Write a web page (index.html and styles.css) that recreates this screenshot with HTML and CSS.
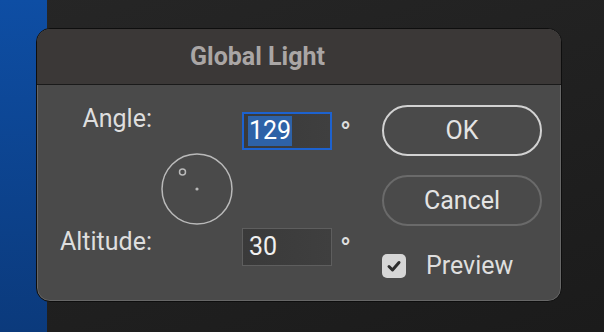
FILE: index.html
```html
<!DOCTYPE html>
<html lang="en">
<head>
  <meta charset="UTF-8">
  <title>Global Light</title>
  <link rel="stylesheet" href="styles.css">
</head>
<body>
  <div class="desktop">
    <div class="side-strip"></div>

    <div class="dialog">
      <div class="dialog-title">Global Light</div>

      <div class="dialog-body">
        <div class="fields">
          <div class="label label-angle">Angle:</div>
          <div class="field field-focus"><span class="selected">129</span></div>
          <div class="deg">°</div>

          <div class="dial">
            <svg width="72" height="72" viewBox="0 0 72 72">
              <circle cx="36" cy="36" r="35" fill="none" stroke="#b9b9b9" stroke-width="1.5"/>
              <circle cx="21.5" cy="19" r="3" fill="none" stroke="#b9b9b9" stroke-width="1.5"/>
              <circle cx="36" cy="36" r="1.6" fill="#b9b9b9"/>
            </svg>
          </div>

          <div class="label label-alt">Altitude:</div>
          <div class="field"><span>30</span></div>
          <div class="deg">°</div>
        </div>

        <div class="actions">
          <button class="btn btn-default">OK</button>
          <button class="btn">Cancel</button>
          <label class="check">
            <span class="box">
              <svg width="16" height="16" viewBox="0 0 16 16">
                <path d="M3 8.5 L6.5 12 L13 4.5" fill="none" stroke="#2e2e2e" stroke-width="3" stroke-linecap="round" stroke-linejoin="round"/>
              </svg>
            </span>
            Preview
          </label>
        </div>
      </div>
    </div>
  </div>
</body>
</html>
```

FILE: styles.css
```css
body {
  margin: 0;
  font-family: Roboto, "Liberation Sans", sans-serif;
  background-color: #202020;
}

.desktop {
  position: relative;
  width: 604px;
  height: 332px;
  overflow: hidden;
  background: linear-gradient(160deg, #262626, #1b1b1b);
}

.side-strip {
  width: 47px;
  height: 100%;
  background: linear-gradient(180deg, #0e4ea4, #0b3a7c);
}

/* the dialog window sits over the desktop */
.dialog {
  position: absolute;
  left: 36px;
  top: 28px;
  width: 526px;
  height: 274px;
  box-sizing: border-box;
  border: 1px solid #0e0e0e;
  border-radius: 14px;
  background-color: #4a4a4a;
  box-shadow: inset 0 0 0 1px rgba(255, 255, 255, 0.16);
  overflow: hidden;
}

.dialog-title {
  height: 56px;
  box-sizing: border-box;
  padding-right: 83px;
  border-bottom: 1px solid #1a1a1a;
  background-color: #3b3837;
  color: #aaa6a5;
  font-size: 25px;
  font-weight: bold;
  line-height: 55px;
  text-align: center;
}

.dialog-body {
  display: flex;
  padding-right: 19px;
}

.fields {
  display: grid;
  grid-template-columns: 115px 90px 90px 50px;
  grid-template-rows: 38px 78px 38px;
  padding-top: 27px;
  color: #dedede;
  font-size: 25px;
  line-height: 30px;
}

.label {
  grid-column: 1 / 3;
  width: 115px;
  text-align: right;
  align-self: start;
}

.label-angle {
  margin-top: -8px;
}

.label-alt {
  margin-top: -1px;
}

.field {
  grid-column: 3;
  box-sizing: border-box;
  height: 38px;
  padding: 3px 6px;
  border: 1px solid #5e5e5e;
  background: linear-gradient(90deg, #3a3a3a, #3f3f3f);
  color: #f0f0f0;
}

.field span {
  display: inline-block;
  line-height: 30px;
}

.field-focus {
  padding: 2px 4px;
  border: 2px solid #1d62cf;
}

.selected {
  padding: 0 1px;
  background-color: #2e62a7;
  color: #ffffff;
}

.deg {
  grid-column: 4;
  padding-left: 8px;
  margin-top: 6px;
  align-self: start;
  font-size: 29px;
  font-weight: 500;
}

.dial {
  grid-column: 2;
  grid-row: 2;
  display: flex;
  align-items: center;
  justify-content: center;
}

.actions {
  display: flex;
  flex-direction: column;
  gap: 19px;
  padding-top: 20px;
  margin-left: auto;
  width: 160px;
}

.btn {
  height: 51px;
  border: 2px solid #6a6a6a;
  border-radius: 26px;
  background: transparent;
  color: #e4e4e4;
  font-family: Roboto, "Liberation Sans", sans-serif;
  font-size: 25px;
}

.btn-default {
  border-color: #d2d2d2;
}

.check {
  display: flex;
  align-items: center;
  gap: 20px;
  margin-top: 6px;
  color: #dedede;
  font-size: 25px;
  line-height: 30px;
}

.box {
  display: flex;
  align-items: center;
  justify-content: center;
  width: 24px;
  height: 24px;
  border-radius: 5px;
  background-color: #d6d6d6;
}
```
